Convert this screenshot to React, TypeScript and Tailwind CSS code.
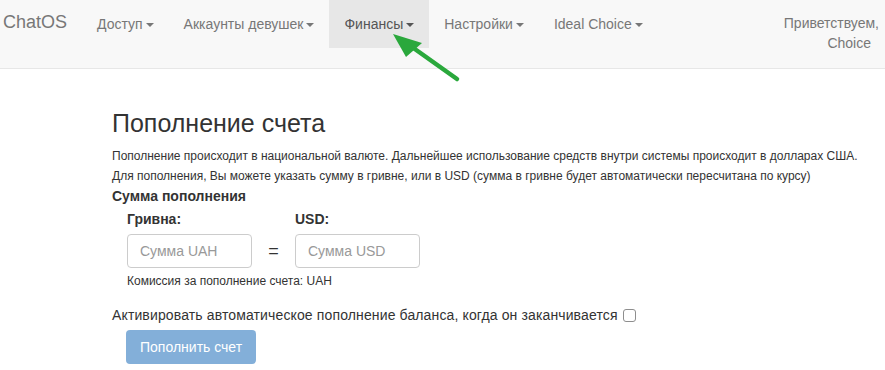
const navItems = ["Доступ", "Аккаунты девушек", "Финансы", "Настройки", "Ideal Choice"];

function Caret() {
  return (
    <span className="ml-[3px] inline-block h-0 w-0 border-x-[4px] border-t-[4px] border-x-transparent border-t-current align-middle" />
  );
}

export default function App() {
  return (
    <div
      className="relative h-[370px] w-[885px] overflow-hidden bg-white text-[#333]"
      style={{ fontFamily: '"Liberation Sans", Arial, sans-serif' }}
    >
      {/* top navbar */}
      <nav className="flex h-[69px] border-b border-[#e7e7e7] bg-[#f8f8f8] text-[14px] leading-[20px]">
        <div className="pl-[3px] pr-[15px] pt-[12px] text-[18px] text-[#777]">ChatOS</div>
        <ul className="flex">
          {navItems.map((item) => (
            <li
              key={item}
              className={
                item === "Финансы"
                  ? "h-[48px] bg-[#e7e7e7] px-[15px] pt-[14px] text-[#555]"
                  : "h-[48px] px-[15px] pt-[14px] text-[#777]"
              }
            >
              {item}
              <Caret />
            </li>
          ))}
        </ul>
        <div className="ml-auto flex flex-col items-end pr-[6px] pt-[13px] text-[#777]">
          <span>Приветствуем,</span>
          <span className="pr-[8px]">Choice</span>
        </div>
      </nav>

      {/* page body */}
      <main className="pl-[112px]">
        <h3 className="mt-[41px] text-[25px] leading-[27px] font-medium text-[#333]">Пополнение счета</h3>
        <div className="mt-[9px] text-[12px] leading-[20px] whitespace-nowrap">
          <p>
            Пополнение происходит в национальной валюте. Дальнейшее использование средств внутри системы происходит в
            долларах США.
          </p>
          <p>Для пополнения, Вы можете указать сумму в гривне, или в USD (сумма в гривне будет автоматически пересчитана по курсу)</p>
        </div>
        <div className="text-[14px] leading-[20px] font-bold">Сумма пополнения</div>

        <div className="mt-[3px] pl-[15px]">
          <div className="grid grid-cols-[125px_43px_125px] items-center text-[14px]">
            <label className="mb-[5px] leading-[20px] font-bold">Гривна:</label>
            <span />
            <label className="mb-[5px] leading-[20px] font-bold">USD:</label>
            <input
              placeholder="Сумма UAH"
              className="h-[34px] rounded-[4px] border border-[#ccc] px-[12px] text-[14px] outline-none placeholder:text-[#999]"
            />
            <span className="text-center text-[18px] text-[#333]">=</span>
            <input
              placeholder="Сумма USD"
              className="h-[34px] rounded-[4px] border border-[#ccc] px-[12px] text-[14px] outline-none placeholder:text-[#999]"
            />
          </div>
          <div className="mt-[5px] text-[12px] leading-[17px]">Комиссия за пополнение счета: UAH</div>
        </div>

        <div className="mt-[15px] flex items-center gap-[5px] text-[14px] leading-[20px] tracking-[0.13px] whitespace-nowrap">
          <span>Активировать автоматическое пополнение баланса, когда он заканчивается</span>
          <input
            type="checkbox"
            className="h-[13px] w-[13px] appearance-none rounded-[3px] border border-[#8e8e8e] bg-white"
          />
        </div>
        <div className="mt-[5px] pl-[14px]">
          <button className="h-[34px] rounded-[4px] bg-[#83afd9] px-[14px] text-[14px] text-white">Пополнить счет</button>
        </div>
      </main>

      {/* annotation arrow */}
      <svg className="pointer-events-none absolute left-0 top-0" width="885" height="370">
        <line x1="457" y1="79" x2="412" y2="47" stroke="#2aa83c" strokeWidth="4.5" strokeLinecap="round" />
        <polygon points="393,34 422,43 406,57" fill="#2aa83c" />
      </svg>
    </div>
  );
}
